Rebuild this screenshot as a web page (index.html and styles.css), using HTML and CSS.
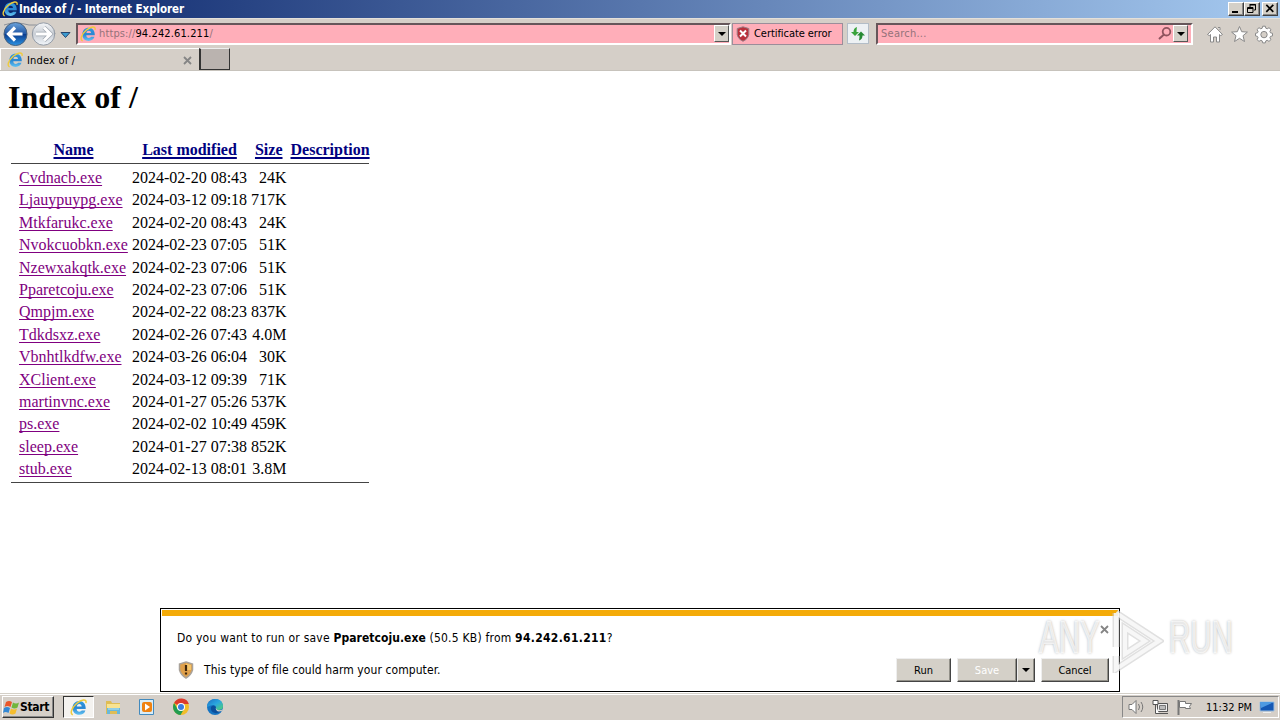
FILE: index.html
```html
<!DOCTYPE html>
<html lang="en"><head><meta charset="utf-8"><title>Index of / - Internet Explorer</title><link rel="stylesheet" href="styles.css"></head>
<body>
<svg class="defs" width="0" height="0"><defs>
<linearGradient id="blue" x1="0" y1="0" x2="0" y2="1"><stop offset="0" stop-color="#6aa3dc"/><stop offset=".48" stop-color="#2459a6"/><stop offset=".5" stop-color="#0a3a8c"/><stop offset="1" stop-color="#2c94e4"/></linearGradient>
<linearGradient id="grey" x1="0" y1="0" x2="0" y2="1"><stop offset="0" stop-color="#f4f6f8"/><stop offset=".5" stop-color="#c9ced5"/><stop offset="1" stop-color="#f2f6fa"/></linearGradient>
<linearGradient id="edge" x1="0" y1="0" x2="1" y2="1"><stop offset="0" stop-color="#1c6fc4"/><stop offset=".5" stop-color="#2ba7e0"/><stop offset="1" stop-color="#55d46a"/></linearGradient>
<linearGradient id="ie-blue" x1="0" y1="0" x2="0" y2="1"><stop offset="0" stop-color="#2f9be0"/><stop offset=".5" stop-color="#2a86d2"/><stop offset="1" stop-color="#63c3f2"/></linearGradient>
<symbol id="ie" viewBox="0 0 16 16"><path fill-rule="evenodd" fill="url(#ie-blue)" d="M8.600 1.800C12.600 1.800 15 4.800 14.800 9.300H6.300C6.400 11 7.300 11.900 8.800 11.900 9.900 11.900 10.600 11.500 11 10.800H14.500C13.600 13.500 11.600 14.900 8.700 14.900 5 14.900 2.400 12.400 2.400 8.500 2.400 4.500 5 1.800 8.600 1.800ZM6.400 7H11C10.900 5.500 10 4.700 8.700 4.700 7.400 4.700 6.600 5.500 6.400 7Z"/><path d="M2.700 14.900C-.3 14 1.300 8.300 6.200 4.200 10.500.6 16 -.7 15 3.800" fill="none" stroke="#efcb3c" stroke-width="1.400"/></symbol>
</defs></svg>
<div class="screen">
<header class="title"><svg class="title-icon" width="16" height="16"><use href="#ie"/></svg><span class="title-text">Index of / - Internet Explorer</span>
<div class="winbtns"><span class="wb"><svg width="14" height="11"><path d="M3 8h6v2H3z"/></svg></span><span class="wb"><svg width="14" height="11"><path d="M5 1.500h5.500V7H9M5 2h6M5 1v3M2.500 4.500H8v5H2.500zM2 5.500h6" fill="none" stroke="#000"/></svg></span><span class="wb last"><svg width="14" height="11"><path d="M3.300 1.800l7 7m0-7l-7 7" stroke="#000" stroke-width="1.700"/></svg></span></div></header>
<div class="nav">
<svg class="navbtns" width="76" height="28"><path d="M4 5Q15 1 29 5H45Q54 6 55 14" fill="none" stroke="#8c9199"/><circle cx="15.500" cy="14" r="11.500" fill="url(#blue)" stroke="#49617d"/><path d="M15 7.500L8.500 14 15 20.500M9 14h13.500" fill="none" stroke="#fff" stroke-width="3.200"/><circle cx="43.500" cy="14" r="11.200" fill="url(#grey)" stroke="#929aa5"/><path d="M44 7.500l6.500 6.500-6.500 6.500M50 14H36" fill="none" stroke="#9fa6af" stroke-width="4.400"/><path d="M44 7.500l6.500 6.500-6.500 6.500M50 14H36" fill="none" stroke="#fff" stroke-width="3"/><path d="M61 12.500h9l-4.500 5z" fill="#3b9bd0" stroke="#27466e"/></svg>
<div class="address"><svg width="16" height="16"><use href="#ie"/></svg><span class="url"><i>https://</i>94.242.61.211<i>/</i></span><span class="drop"><b></b></span></div>
<div class="cert"><svg width="14" height="16"><path d="M7 .8l5.800 1.700v6Q12 13 7 15.300 2 13 1.200 8.500v-6z" fill="#b9303c" stroke="#9a8088"/><path d="M4 4.500l6 6M10 4.500l-6 6" stroke="#fff" stroke-width="2"/></svg><span class="t cert-label">Certificate error</span></div>
<div class="refresh"><svg width="20" height="20"><path d="M9 3Q5.500 4 5.500 8H3l4 4 4-4H8.500Q8.500 5 9 3z" fill="#38a33b"/><path d="M11 16.500q3.500-1 3.500-5H17l-4-4-4 4h2.500q0 3-.5 5z" fill="#268932"/></svg></div>
<div class="search"><span class="t search-label">Search...</span><svg width="16" height="16"><circle cx="9.500" cy="5.700" r="3.800" fill="none" stroke="#8f535e" stroke-width="1.800"/><path d="M7 8.500L2 13" stroke="#8f535e" stroke-width="2"/></svg><span class="drop"><b></b></span></div>
<svg class="tools" width="70" height="22"><g fill="#fff" stroke="#898989"><path d="M1.500 10.500L9 2.800l7.500 7.700-1.800 1.100-1.200-1.100V18h-3v-5h-3v5h-3v-7.500l-1.200 1.100zM12 3.500h2V6"/><path d="M33.500 2.500l2.200 5.200 5.700.4-4.400 3.600 1.500 5.800-5-3.200-5 3.200 1.500-5.800-4.400-3.600 5.700-.4z"/><path d="M56.700 3.200h2.600l.5 2 1.400.6 1.800-1.100L65 6.600l-1.100 1.800.6 1.400 2 .5v2.600l-2 .5-.6 1.400L65 16.500 63 18.400l-1.800-1.100-1.400.6-.5 2h-2.600l-.5-2-1.400-.6-1.800 1.100-2-1.900 1.100-1.700-.6-1.400-2-.5v-2.600l2-.5.6-1.400L51 6.600l2-1.900 1.800 1.100 1.400-.6z" transform="translate(0 -1)"/><circle cx="58" cy="10.600" r="3.200" fill="#d5cfc8"/></g></svg>
</div>
<div class="tabs"><div class="tab"><svg width="16" height="16"><use href="#ie"/></svg><span class="t tab-label">Index of /</span><svg class="x" width="9" height="9"><path d="M1 1l7 7m0-7L1 8" stroke="#858585" stroke-width="1.800"/></svg></div><div class="newtab"></div></div>
<main class="page"><h1>Index of /</h1>
<div class="row head"><a>Name</a><a>Last modified</a><a>Size</a><a>Description</a></div>
<div class="list">
<div class="row"><a>Cvdnacb.exe</a><span>2024-02-20 08:43</span><em>24K</em></div>
<div class="row"><a>Ljauypuypg.exe</a><span>2024-03-12 09:18</span><em>717K</em></div>
<div class="row"><a>Mtkfarukc.exe</a><span>2024-02-20 08:43</span><em>24K</em></div>
<div class="row"><a>Nvokcuobkn.exe</a><span>2024-02-23 07:05</span><em>51K</em></div>
<div class="row"><a>Nzewxakqtk.exe</a><span>2024-02-23 07:06</span><em>51K</em></div>
<div class="row"><a>Pparetcoju.exe</a><span>2024-02-23 07:06</span><em>51K</em></div>
<div class="row"><a>Qmpjm.exe</a><span>2024-02-22 08:23</span><em>837K</em></div>
<div class="row"><a>Tdkdsxz.exe</a><span>2024-02-26 07:43</span><em>4.0M</em></div>
<div class="row"><a>Vbnhtlkdfw.exe</a><span>2024-03-26 06:04</span><em>30K</em></div>
<div class="row"><a>XClient.exe</a><span>2024-03-12 09:39</span><em>71K</em></div>
<div class="row"><a>martinvnc.exe</a><span>2024-01-27 05:26</span><em>537K</em></div>
<div class="row"><a>ps.exe</a><span>2024-02-02 10:49</span><em>459K</em></div>
<div class="row"><a>sleep.exe</a><span>2024-01-27 07:38</span><em>852K</em></div>
<div class="row"><a>stub.exe</a><span>2024-02-13 08:01</span><em>3.8M</em></div>
</div></main>
<section class="dialog"><div class="stripe"></div>
<div class="question"><span class="t q1">Do you want to run or save <b>Pparetcoju.exe</b> (50.5 KB) from <b class="ip">94.242.61.211</b>?</span><svg class="x" width="9" height="9"><path d="M1 1l7 7m0-7L1 8" stroke="#858585" stroke-width="1.800"/></svg></div>
<div class="actions"><svg width="16" height="18"><path d="M8 1l6.500 2v6Q13 14 8 17 3 14 1.500 9V3z" fill="#e0a04a" stroke="#a9a29a" stroke-width="1.500"/><path d="M8 2.500l5 1.500v5H8z" fill="#f5c66b"/><path d="M8 4v6M8 11.500v2" stroke="#40260c" stroke-width="2.200"/></svg><span class="t harm">This type of file could harm your computer.</span><span class="btn run">Run</span><span class="btn save">Save</span><span class="btn arrow"><b></b></span><span class="btn cancel">Cancel</span></div>
</section>
<div class="watermark"><span>ANY</span><svg width="52" height="64"><path d="M4 4L47 32 4 60V47M4 4v34M13 19v26l20-13z" fill="none" stroke="#d0d0d0" stroke-opacity=".65" stroke-width="7"/><path d="M4 4L47 32 4 60V47M4 4v34M13 19v26l20-13z" fill="none" stroke="#fff" stroke-opacity=".75" stroke-width="4"/></svg><span>RUN</span></div>
<footer class="taskbar"><div class="start"><svg width="17" height="17"><path d="M3 3q3-2 6 0L7.500 8q-3-2-6 0z" fill="#e9572b"/><path d="M10 3.500q3 2 6 0l-1.500 5q-3 2-6 0z" fill="#71b63c"/><path d="M1 9q3-2 6 0l-1.500 5q-3-2-5.500 0z" fill="#3388d5"/><path d="M8 9.500q3 2 6 0l-1.500 5q-3 2-6 0z" fill="#f5bd2f"/></svg><span>Start</span></div>
<div class="task-ie"><svg width="17" height="17"><use href="#ie"/></svg></div>
<div class="apps"><svg width="18" height="18"><path d="M2 3h5l1 2h8v11H2z" fill="#dfbd55"/><path d="M3 6h13v6H3z" fill="#f8e391"/><path d="M3 10h13v6h-3v-3H6v3H3z" fill="#68b8db"/><path d="M4 11h11" stroke="#b9e5f1"/></svg>
<svg width="18" height="18"><path d="M1.500 1.500h14v15h-14z" fill="#d9edf8" stroke="#438abd"/><rect x="4" y="4" width="10" height="10" rx="2" fill="#ef8211"/><path d="M7 5.500l5 3.500-5 3.500z" fill="#fff"/></svg>
<svg width="18" height="18"><circle cx="9" cy="9" r="8" fill="#f1bd2a"/><path d="M9 9L2.100 5A8 8 0 0 1 16.900 6H9z" fill="#db3b2d"/><path d="M2.100 5A8 8 0 0 0 8.500 17L12 11 9 9 5.500 11z" fill="#219c51"/><circle cx="9" cy="9" r="4" fill="#fff"/><circle cx="9" cy="9" r="3" fill="#397de0"/></svg>
<svg width="18" height="18"><circle cx="9" cy="9" r="8" fill="#1674c2"/><path d="M1 9C1-1 17-2 17 8q0 4-5 4-3 0-2-3Q9 5 1 9z" fill="url(#edge)"/><path d="M10 9q-1 4 3 4 2 0 3-1-3 4-7 3-5-1-4-6 2-3 5 0z" fill="#0b4f9c"/><path d="M9.800 9.500q.5 2.800 3.500 2.800 2 0 3.700-1.300-1 2.600-4 2.500-3.500-.3-3.200-4z" fill="#d6d2c9"/></svg></div>
<div class="tray"><svg width="18" height="16"><path d="M1 5.500h3l4-4v13l-4-4H1z" fill="#fff" stroke="#777"/><path d="M10.500 5q2 3 0 6M13 3q3.500 5 0 10" fill="none" stroke="#777"/></svg><svg width="18" height="17"><path d="M5.500 4.500h10v8h-10z" fill="#eee" stroke="#555"/><path d="M7.500 6.500h6v4h-6z" fill="#bbb" stroke="#777"/><path d="M1 1.500h5v4H1zM3.500 5.500v9H7" fill="#fff" stroke="#555"/><path d="M6 14.500h10" stroke="#555"/></svg><svg width="18" height="16"><path d="M2.500 1v15" stroke="#777" stroke-width="2"/><path d="M3.500 2.500h6v2h6l-2 3 1 2h-5v-1h-6z" fill="#fff" stroke="#777"/></svg><span class="t clock">11:32 PM</span><svg width="17" height="14"><path d="M1 2h14v9H1z" fill="#1558b4" stroke="#9ebede"/><path d="M1 2h14L2 8z" fill="#4e9ae2"/><path d="M4 12.500h8" stroke="#eee"/></svg></div>
</footer></div></body></html>
```
FILE: styles.css
```css
*{box-sizing:border-box}
body{margin:0;background:#fff;overflow:hidden;font-family:"DejaVu Sans Condensed","DejaVu Sans",sans-serif;font-stretch:condensed;font-size:11px;color:#000}
svg{display:block;flex-shrink:0}
.defs{position:absolute}
.screen{position:relative;width:1280px;height:720px;display:flex;flex-direction:column}
.t{white-space:nowrap}
.title{height:18px;display:flex;align-items:center;padding-left:2px;padding-right:2px;background:linear-gradient(90deg,#0a246a,#a6caf0)}
.title-text{font-size:11.5px;font-weight:bold;color:#fff;line-height:18px;white-space:nowrap;letter-spacing:-.05px;margin-left:1px}
.winbtns{display:flex;margin-left:auto}
.wb{width:16px;height:14px;background:#d4d0c8;border:1px solid;border-color:#fff #404040 #404040 #fff;box-shadow:inset -1px -1px #888}
.last{margin-left:2px}
.nav{height:30px;background:#d5cfc8;display:flex;align-items:center;border-top:1px solid #e4e0da}
.address{width:655px;height:22px;background:#ffaeb9;border:2px solid;border-color:#66565a #fff #fff #66565a;display:flex;align-items:center;padding-left:2px}
.url{margin-left:3px;letter-spacing:.12px}
.url i{font-style:normal;color:#94727a}
.drop{width:15px;height:17px;margin-left:auto;background:#d4d0c8;border:1px solid;border-color:#fff #555 #555 #fff;display:flex;align-items:center;justify-content:center}
.drop b,.arrow b{border:4px solid transparent;border-top-color:#000;border-bottom:0}
.cert{width:111px;height:22px;margin-left:1px;background:#ffaeb9;border:1px solid #9b8d9a;display:flex;align-items:center;padding-left:3px}
.cert-label{margin-left:4px;letter-spacing:-.06px}
.refresh{width:22px;height:21px;margin-left:4px;border:1px solid #b3bdc7;background:#edf1f4}
.search{width:317px;height:22px;margin-left:7px;border:2px solid;border-color:#66565a #fff #fff #66565a;background:#ffaeb9;display:flex;align-items:center;padding:0 3px 0 3px}
.search-label{color:#94727a;margin-right:auto;letter-spacing:.25px}
.search .drop{margin-left:0}
.tools{margin-left:13px;margin-top:3px}
.tabs{height:23px;background:#d5cfc8;display:flex;border-bottom:1px solid #c7c3bc}
.tab{width:199px;height:22px;border-top:1px solid #fff;border-left:1px solid #fff;display:flex;align-items:center;padding:1px 7px 0 6px}
.tab-label{margin-left:4px;letter-spacing:.18px}
.x{margin-left:auto}
.newtab{width:31px;height:22px;background:#bab3af;border:1px solid;border-color:#eee #333 #333 #333;border-left-width:2px}
.page{height:622px;font-family:"Liberation Serif",serif;font-size:16px}
h1{margin:8px 0 0 8px;font-size:32px;line-height:37px;height:60px;white-space:nowrap}
.row{display:grid;grid-template-columns:109px 115px 35.5px 79px;column-gap:4px;height:22.4px;line-height:22px;white-space:nowrap}
.row a{text-decoration:underline;text-underline-offset:2px;text-decoration-thickness:1px;color:#800080;text-decoration-skip-ink:none}
.row em{font-style:normal;text-align:right}
.head{margin-left:19px;height:24px}
.head a{color:#000080;font-weight:bold;text-align:center;text-decoration-thickness:2px}
.list{width:358px;margin-left:11px;padding:3px 0 2px 8px;border:solid #444;border-width:1px 0}
.dialog{position:absolute;left:160px;top:608px;width:960px;height:84px;border:1px solid #000;background:#fff;padding:1px}
.stripe{height:6px;background:#f4ab08}
.question{height:40px;display:flex;align-items:center;padding:3px 9px 0 15px}
.question .x{margin-top:-17px}
.q1,.harm{font-size:12px;letter-spacing:.08px}
.q1{letter-spacing:.22px}
.q1 b{letter-spacing:.05px}
.q1 .ip{letter-spacing:.32px}
.actions{height:27px;display:flex;align-items:center;padding-left:16px}
.actions .t{margin-left:10px}
.btn{height:24px;margin-top:1px;background:#d4d0c8;border:1px solid;border-color:#eee #444 #444 #eee;box-shadow:inset -1px -1px #929088;display:flex;align-items:center;justify-content:center}
.run{width:55px;margin-left:auto;margin-right:6px}
.save{width:60px;color:#fff}
.arrow{width:18px;margin-right:6px}
.cancel{width:68px;margin-right:9px;letter-spacing:-.1px}
.watermark{position:absolute;left:1039px;top:609px;display:flex;align-items:center;font:46px/36px "Liberation Sans",sans-serif;color:rgba(255,255,255,.75);-webkit-text-stroke:1px rgba(255,255,255,.6);text-shadow:0 0 3px #999}
.watermark span{display:block;width:65px;margin-bottom:8px;transform:scaleX(.64);transform-origin:left}
.watermark svg{margin:0 5px 0 8px}
.taskbar{height:27px;background:#d5cfc8;border-top:1px solid #d4d0c8;box-shadow:inset 0 1px #fff;display:flex;align-items:center}
.start{width:52px;height:22px;margin-left:2px;border:1px solid;border-color:#fff #333 #333 #fff;box-shadow:inset -1px -1px #888;display:flex;align-items:center;font-size:12px;font-weight:bold;letter-spacing:-.3px}
.task-ie{width:31px;height:22px;margin-left:9px;background:#f4f2ef;border:1px solid;border-color:#333 #fff #fff #333;display:flex;align-items:center;justify-content:center}
.apps{display:flex;gap:16px;margin-left:10px}
.tray{width:157px;height:22px;margin-left:auto;margin-right:1px;border:1px solid;border-color:#888 #fff #fff #888;display:flex;align-items:center;padding-left:5px}
.tray svg{margin-right:6px}
.tray .clock{margin:0 7px 0 6px}
```
